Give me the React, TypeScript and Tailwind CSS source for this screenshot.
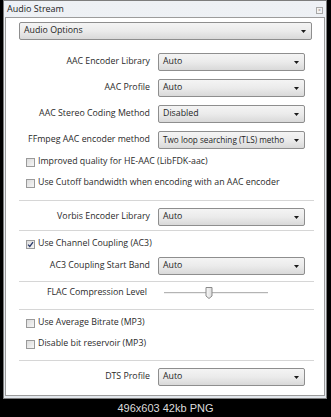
import React from 'react'

const ui = { fontFamily: '"Open Sans", "Noto Sans", sans-serif' }

function Arrow() {
  return (
    <svg width="5" height="3" viewBox="0 0 5 3" className="ml-[3px] shrink-0">
      <path d="M0 0h5L2.5 3z" fill="#1a1a1a" />
    </svg>
  )
}

function Select({ value, className = '', small = false }: { value: string; className?: string; small?: boolean }) {
  return (
    <div
      className={`flex h-[18px] items-center justify-between rounded-[2px] border border-[#8e8e8e] bg-gradient-to-b from-[#f4f4f4] via-[#ebebeb] to-[#d9d9d9] pl-[4px] pr-[5px] text-[#1e1e1e] ${small ? 'text-[8.2px]' : 'text-[8.8px]'} ${className}`}
    >
      <span className="min-w-0 flex-1 whitespace-nowrap">{value}</span>
      <Arrow />
    </div>
  )
}

function Row({ label, value, small = false, className = '' }: { label: string; value: string; small?: boolean; className?: string }) {
  return (
    <div className={`flex items-center ${className}`}>
      <span className="w-[131px] shrink-0 text-right text-[8.8px] text-[#2a2a2a]">{label}</span>
      <Select value={value} small={small} className="ml-[8px] w-[147px]" />
    </div>
  )
}

function Check({ label, checked = false, className = '' }: { label: string; checked?: boolean; className?: string }) {
  return (
    <div className={`flex h-[14px] items-center pl-[7px] ${className}`}>
      <span className="flex h-[9px] w-[9px] items-center justify-center border border-[#9a9a9a] bg-gradient-to-br from-[#dcdcdc] to-[#f6f6f6]">
        {checked && (
          <svg width="7" height="7" viewBox="0 0 7 7">
            <path d="M1 3.6 2.8 5.4 6 1.2" stroke="#2b3a6b" strokeWidth="1.3" fill="none" />
          </svg>
        )}
      </span>
      <span className="ml-[3px] text-[8.8px] text-[#2a2a2a]">{label}</span>
    </div>
  )
}

function Divider({ className = '' }: { className?: string }) {
  return <div className={`h-px bg-[#d6d6d6] ${className}`} />
}

export default function App() {
  return (
    <div className="flex h-[417px] w-[331px] flex-col bg-black" style={ui}>
      <div className="ml-[3px] flex h-[399px] w-[324px] flex-col border border-[#7d7d7d] bg-gradient-to-b from-[#eef1f5] to-[#e3e7ec]">
        <div className="flex h-[16px] shrink-0 items-center justify-between pl-[3px] pr-[3px]">
          <span className="text-[9px] text-[#1c1c1c]">Audio Stream</span>
          <span className="mt-[3px] flex h-[7px] w-[7px] items-center justify-center border border-[#a8a8a8] bg-[#f4f4f4] text-[5px] leading-none text-[#777]">
            ×
          </span>
        </div>
        <div className="mx-[1px] mb-[2px] flex flex-1 flex-col border border-[#9c9c9c] bg-white px-[13px] pr-[10px]">
          <Select value="Audio Options" className="mt-[4px] w-[293px]" />

          <Row label="AAC Encoder Library" value="Auto" className="mt-[13px]" />
          <Row label="AAC Profile" value="Auto" className="mt-[8px]" />
          <Row label="AAC Stereo Coding Method" value="Disabled" className="mt-[8px]" />
          <Row label="FFmpeg AAC encoder method" value="Two loop searching (TLS) metho" small className="mt-[8px]" />

          <Check label="Improved quality for HE-AAC (LibFDK-aac)" className="mt-[6px]" />
          <Check label="Use Cutoff bandwidth when encoding with an AAC encoder" className="mt-[7px]" />

          <Divider className="mt-[10px]" />
          <Row label="Vorbis Encoder Library" value="Auto" className="mt-[7px]" />
          <Divider className="mt-[4px]" />

          <Check label="Use Channel Coupling (AC3)" checked className="mt-[6px]" />
          <Row label="AC3 Coupling Start Band" value="Auto" className="mt-[6px]" />
          <Divider className="mt-[6px]" />

          <div className="mt-[3px] flex h-[16px] items-center">
            <span className="w-[128px] shrink-0 text-right text-[8.8px] text-[#2a2a2a]">FLAC Compression Level</span>
            <div className="relative ml-[17px] h-[12px] w-[104px]">
              <div className="absolute left-0 right-0 top-[5px] h-[2px] border-t border-[#b4b4b4] bg-[#efefef]" />
              <svg width="8" height="12" viewBox="0 0 8 12" className="absolute left-[41px] top-0">
                <defs>
                  <linearGradient id="th" x1="0" x2="1" y1="0" y2="0">
                    <stop offset="0" stopColor="#fafafa" />
                    <stop offset="1" stopColor="#dcdcdc" />
                  </linearGradient>
                </defs>
                <path d="M1 0.5h6v8.5l-3 2.5l-3-2.5z" fill="url(#th)" stroke="#8a8a8a" strokeWidth="1" />
              </svg>
            </div>
          </div>
          <Divider className="mt-[8px]" />

          <Check label="Use Average Bitrate (MP3)" className="mt-[6px]" />
          <Check label="Disable bit reservoir (MP3)" className="mt-[7px]" />
          <Divider className="mt-[9px]" />
          <Row label="DTS Profile" value="Auto" className="mt-[7px]" />
        </div>
      </div>
      <div
        className="flex flex-1 items-center justify-center text-[11px] text-[#dcdcdc]"
        style={{ fontFamily: '"Liberation Sans", Arial, sans-serif' }}
      >
        496x603 42kb PNG
      </div>
    </div>
  )
}
